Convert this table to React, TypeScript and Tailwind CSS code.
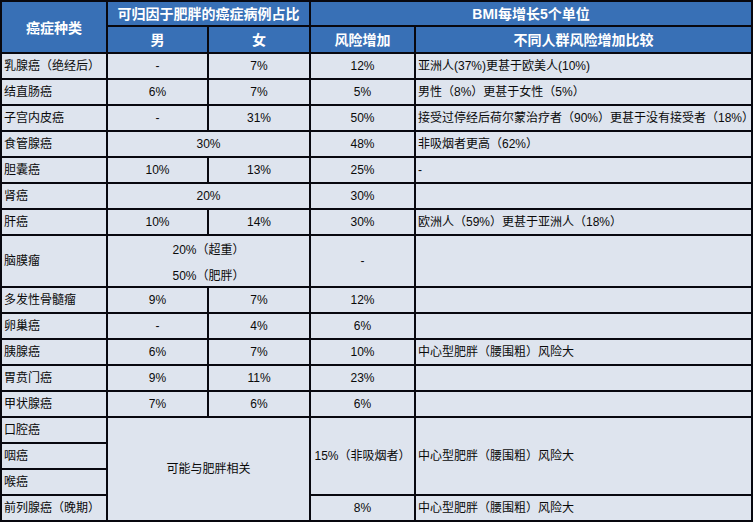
import React from "react";

const font = "font-['Liberation_Sans','Noto_Sans_CJK_SC',sans-serif]";

type C = { t?: React.ReactNode; cls?: string; a?: "l" | "c" };

function Cell({ t, cls = "", a = "c" }: C) {
  return (
    <div
      className={`bg-[#dee4ee] text-[#0a0a0a] text-[12px] leading-none flex items-center whitespace-nowrap ${
        a === "l" ? "justify-start pl-[2px]" : "justify-center"
      } ${cls}`}
    >
      {t}
    </div>
  );
}

function H({ t, cls = "" }: { t: string; cls?: string }) {
  return (
    <div
      className={`bg-[#3870b6] text-white text-[14px] font-bold leading-none flex justify-center whitespace-nowrap ${cls}`}
    >
      {t}
    </div>
  );
}

export default function App() {
  return (
    <div className={`w-[756px] h-[523px] bg-white ${font}`}>
      <div className="grid w-fit bg-[#08080f] p-[2px] gap-[2px] grid-cols-[104px_99px_100px_103px_335px] grid-rows-[23px_25px_repeat(18,24px)]">
        <H t="癌症种类" cls="row-span-2 h-[50px] items-start pt-[19px]" />
        <H t="可归因于肥胖的癌症病例占比" cls="col-span-2 items-center" />
        <H t="BMI每增长5个单位" cls="col-span-2 items-center" />
        <H t="男" cls="items-center" />
        <H t="女" cls="items-center" />
        <H t="风险增加" cls="items-center" />
        <H t="不同人群风险增加比较" cls="items-center" />

        <Cell a="l" t="乳腺癌（绝经后）" />
        <Cell t="-" />
        <Cell t="7%" />
        <Cell t="12%" />
        <Cell a="l" t="亚洲人(37%)更甚于欧美人(10%)" />

        <Cell a="l" t="结直肠癌" />
        <Cell t="6%" />
        <Cell t="7%" />
        <Cell t="5%" />
        <Cell a="l" t="男性（8%）更甚于女性（5%）" />

        <Cell a="l" t="子宫内皮癌" />
        <Cell t="-" />
        <Cell t="31%" />
        <Cell t="50%" />
        <Cell a="l" t="接受过停经后荷尔蒙治疗者（90%）更甚于没有接受者（18%）" />

        <Cell a="l" t="食管腺癌" />
        <Cell t="30%" cls="col-span-2" />
        <Cell t="48%" />
        <Cell a="l" t="非吸烟者更高（62%）" />

        <Cell a="l" t="胆囊癌" />
        <Cell t="10%" />
        <Cell t="13%" />
        <Cell t="25%" />
        <Cell a="l" t="-" />

        <Cell a="l" t="肾癌" />
        <Cell t="20%" cls="col-span-2" />
        <Cell t="30%" />
        <Cell a="l" t="" />

        <Cell a="l" t="肝癌" />
        <Cell t="10%" />
        <Cell t="14%" />
        <Cell t="30%" />
        <Cell a="l" t="欧洲人（59%）更甚于亚洲人（18%）" />

        <Cell a="l" t="脑膜瘤" cls="row-span-2" />
        <div className="col-span-2 row-span-2 bg-[#dee4ee] text-[#0a0a0a] text-[12px] leading-none flex flex-col items-center justify-between pt-[8px] pb-[4px] whitespace-nowrap">
          <span>20%（超重）</span>
          <span>50%（肥胖）</span>
        </div>
        <Cell t="-" cls="row-span-2" />
        <Cell a="l" t="" cls="row-span-2" />

        <Cell a="l" t="多发性骨髓瘤" />
        <Cell t="9%" />
        <Cell t="7%" />
        <Cell t="12%" />
        <Cell a="l" t="" />

        <Cell a="l" t="卵巢癌" />
        <Cell t="-" />
        <Cell t="4%" />
        <Cell t="6%" />
        <Cell a="l" t="" />

        <Cell a="l" t="胰腺癌" />
        <Cell t="6%" />
        <Cell t="7%" />
        <Cell t="10%" />
        <Cell a="l" t="中心型肥胖（腰围粗）风险大" />

        <Cell a="l" t="胃贲门癌" />
        <Cell t="9%" />
        <Cell t="11%" />
        <Cell t="23%" />
        <Cell a="l" t="" />

        <Cell a="l" t="甲状腺癌" />
        <Cell t="7%" />
        <Cell t="6%" />
        <Cell t="6%" />
        <Cell a="l" t="" />

        <Cell a="l" t="口腔癌" />
        <Cell t="可能与肥胖相关" cls="col-span-2 row-span-4" />
        <Cell t="15%（非吸烟者）" cls="row-span-3" />
        <Cell a="l" t="中心型肥胖（腰围粗）风险大" cls="row-span-3" />
        <Cell a="l" t="咽癌" />
        <Cell a="l" t="喉癌" />
        <Cell a="l" t="前列腺癌（晚期）" />
        <Cell t="8%" />
        <Cell a="l" t="中心型肥胖（腰围粗）风险大" />
      </div>
    </div>
  );
}
